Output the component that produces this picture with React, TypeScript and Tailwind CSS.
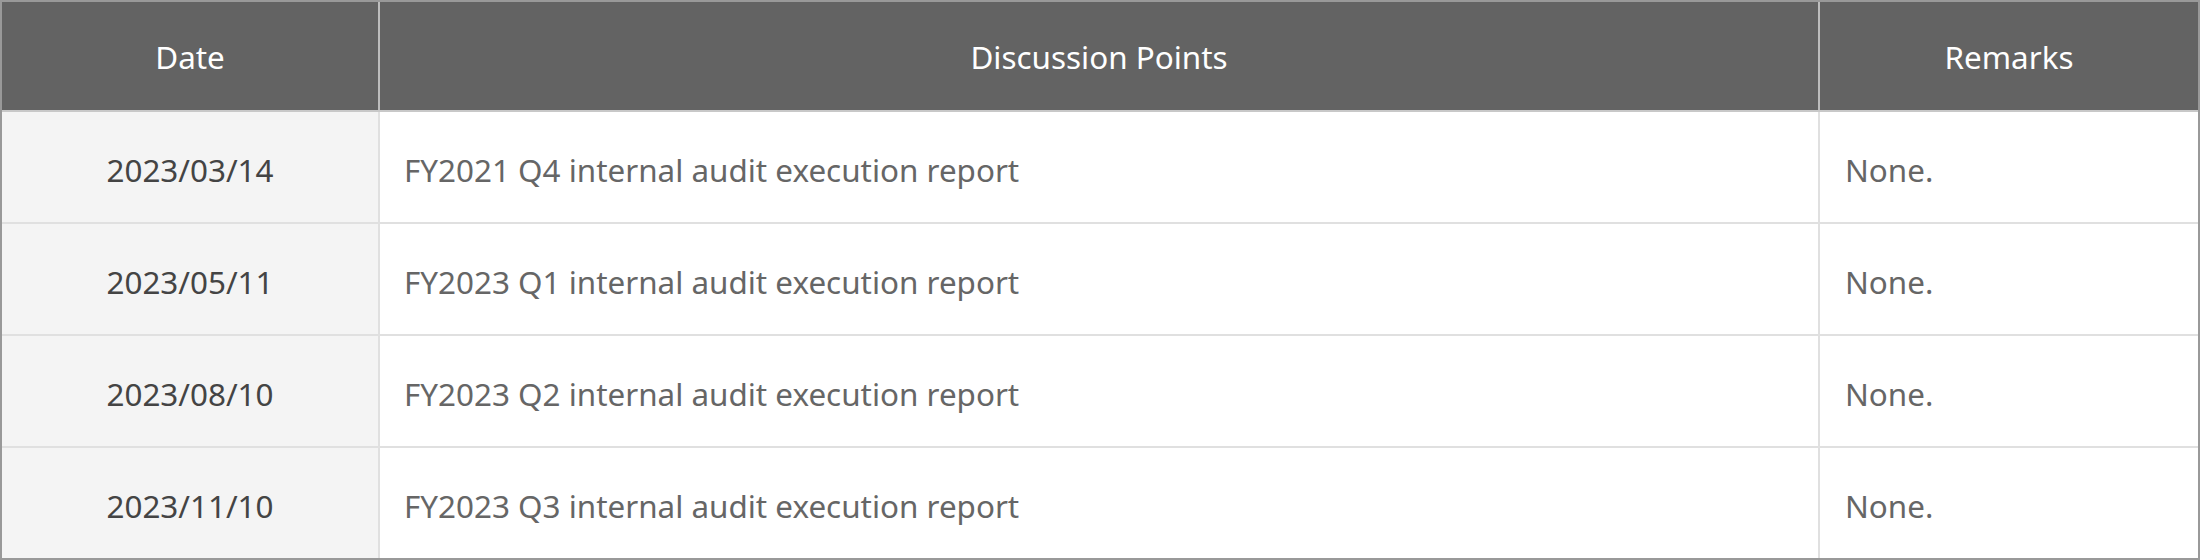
const ROWS = [
  { date: "2023/03/14", point: "FY2021 Q4 internal audit execution report", remark: "None." },
  { date: "2023/05/11", point: "FY2023 Q1 internal audit execution report", remark: "None." },
  { date: "2023/08/10", point: "FY2023 Q2 internal audit execution report", remark: "None." },
  { date: "2023/11/10", point: "FY2023 Q3 internal audit execution report", remark: "None." },
];

export default function App() {
  return (
    <div className="w-[2200px] bg-white" style={{ fontFamily: '"Noto Sans", "Open Sans", sans-serif' }}>
      <div className="border-2 border-[#999999]">
        {/* Header */}
        <div className="flex h-[110px] bg-[#636363] border-b-2 border-[#c8c8c8] text-white text-[31.4px]">
          <div className="w-[378px] border-r-2 border-[#bdbdbd] flex items-center justify-center pt-[2px]">Date</div>
          <div className="w-[1440px] border-r-2 border-[#bdbdbd] flex items-center justify-center pt-[2px]">Discussion Points</div>
          <div className="flex-1 flex items-center justify-center pt-[2px]">Remarks</div>
        </div>

        {ROWS.map((r, i) => {
          const last = i === ROWS.length - 1;
          return (
            <div
              key={r.date}
              className={last ? "flex h-[110px] text-[31.4px]" : "flex h-[112px] text-[31.4px] border-b-2 border-[#e0e0e0]"}
            >
              <div className="w-[378px] bg-[#f4f4f4] border-r-2 border-[#e0e0e0] flex items-center justify-center pt-[5px] text-[#444444]">
                {r.date}
              </div>
              <div className="w-[1440px] border-r-2 border-[#e0e0e0] flex items-center pl-[24px] pt-[5px] text-[#666666]">
                {r.point}
              </div>
              <div className="flex-1 flex items-center pl-[25px] pt-[5px] text-[#666666]">{r.remark}</div>
            </div>
          );
        })}
      </div>
    </div>
  );
}
